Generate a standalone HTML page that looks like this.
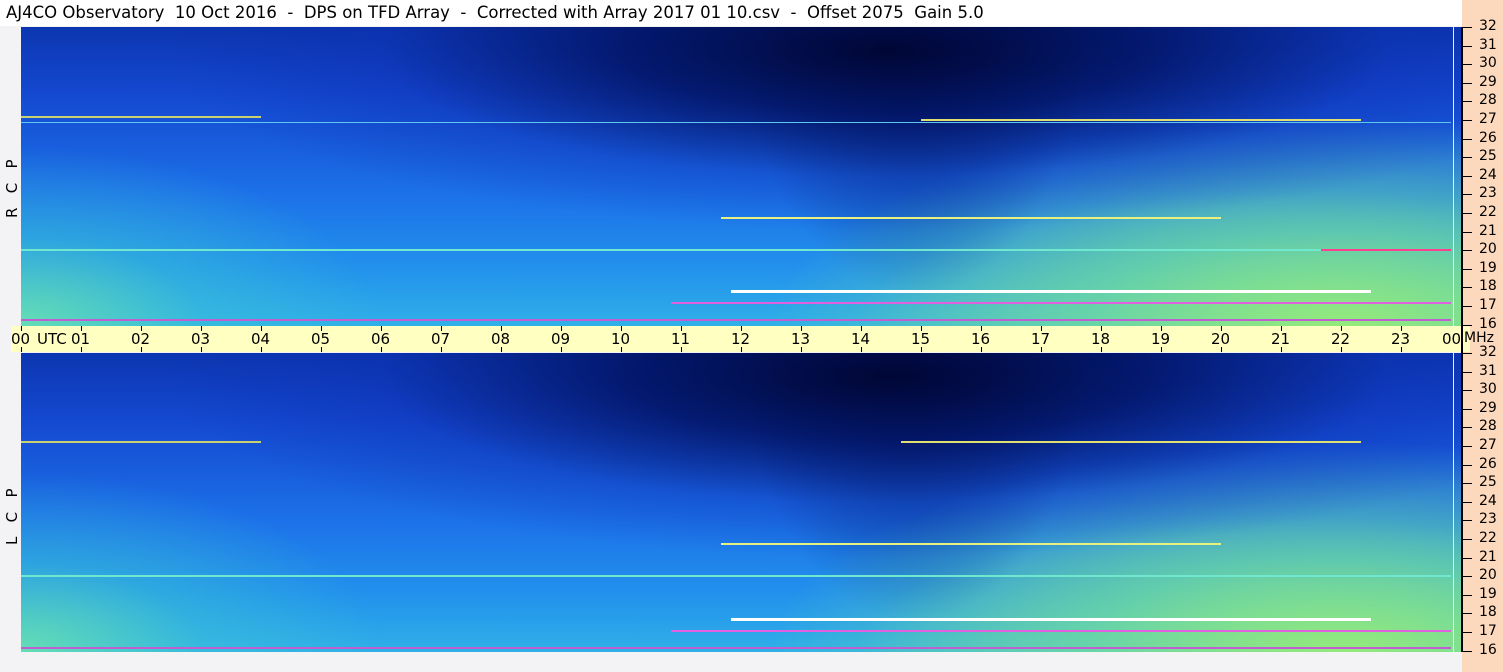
<!DOCTYPE html>
<html><head><meta charset="utf-8"><style>
*{margin:0;padding:0;box-sizing:border-box}
body{width:1503px;height:672px;position:relative;background:#f3f3f6;font-family:"DejaVu Sans","Liberation Sans",sans-serif;overflow:hidden}
.title{position:absolute;left:0;top:0;width:1462px;height:26px;background:#fff;font-size:16.5px;line-height:26px;padding-left:6px;white-space:pre;color:#000}
.peach{position:absolute;left:1462px;top:0;width:41px;height:672px;background:#fcd9bd}
.panel{position:absolute;left:21px;width:1440px;height:299px;overflow:hidden;
background:
radial-gradient(ellipse 50% 60% at 60% 8%,rgba(0,5,50,.95) 0%,rgba(0,15,90,.8) 35%,rgba(10,40,170,.3) 70%,rgba(10,40,170,0) 100%),
radial-gradient(ellipse 12% 90% at 62% 0%,rgba(0,10,70,.6) 0%,rgba(0,10,70,0) 100%),
radial-gradient(ellipse 40% 70% at 92% 100%,rgba(150,235,120,.95) 0%,rgba(110,220,160,.7) 45%,rgba(60,180,220,0) 100%),
radial-gradient(ellipse 30% 45% at 88% 100%,rgba(170,240,110,.6) 0%,rgba(170,240,110,0) 100%),
radial-gradient(ellipse 25% 60% at 0% 100%,rgba(110,230,170,.85) 0%,rgba(60,200,210,.45) 50%,rgba(40,160,230,0) 100%),
linear-gradient(180deg,#0c36b0 0%,#1448d0 22%,#1c70e8 55%,#2290ec 80%,#30b0e8 100%)}
.panel div{position:absolute}
.ln{height:2px}
.band{position:absolute;left:11px;top:326px;width:1459px;height:26px;background:#ffffc2}
.band span{position:absolute;top:4px;font-size:15px}
.tk{position:absolute;width:1px;background:#000}
.ax{position:absolute;left:1461px;width:2px;background:#000}
.lab{position:absolute;font-size:14px;left:1479px}
.side{position:absolute;left:3px;font-size:15px;transform:rotate(-90deg);transform-origin:left top;white-space:pre}
.rline{position:absolute;left:1453px;width:1px;background:#e0f0ff}
</style></head><body>
<div class="title">AJ4CO Observatory  10 Oct 2016  -  DPS on TFD Array  -  Corrected with Array 2017 01 10.csv  -  Offset 2075  Gain 5.0</div>
<div class="peach"></div>

<div class="panel" style="top:27px">
<div class="ln" style="left:0;top:95px;width:1430px;height:1px;background:#60c8f0"></div>
<div class="ln" style="left:0;top:222px;width:1430px;background:#70e8d0"></div>
<div class="ln" style="left:0;top:89px;width:240px;height:2px;background:#c8d070"></div>
<div class="ln" style="left:710px;top:263px;width:640px;height:3px;background:#fff"></div>
<div class="ln" style="left:650px;top:275px;width:780px;background:#e060e0"></div>
<div class="ln" style="left:700px;top:190px;width:500px;background:#e8f080"></div>
<div class="ln" style="left:900px;top:92px;width:440px;height:2px;background:#e0e070"></div>
<div class="ln" style="left:0;top:292px;width:1430px;background:#c060d0"></div>
<div class="ln" style="left:1300px;top:222px;width:130px;background:#ff4090"></div>
</div>
<div class="panel" style="top:353px">
<div class="ln" style="left:0;top:88px;width:240px;height:2px;background:#c8d070"></div>
<div class="ln" style="left:0;top:222px;width:1430px;background:#70e8d0"></div>
<div class="ln" style="left:710px;top:265px;width:640px;height:3px;background:#fff"></div>
<div class="ln" style="left:650px;top:277px;width:780px;background:#e060e0"></div>
<div class="ln" style="left:700px;top:190px;width:500px;background:#e8f080"></div>
<div class="ln" style="left:880px;top:88px;width:460px;height:2px;background:#e0e070"></div>
<div class="ln" style="left:0;top:294px;width:1430px;background:#c060d0"></div>
</div>
<div class="rline" style="top:27px;height:299px"></div>
<div class="rline" style="top:353px;height:299px"></div>

<div class="band" id="band"></div>
<div class="ax" style="top:27px;height:625px"></div>
<div style="position:absolute;left:1464px;top:330px;font-size:14px">MHz</div>

<div class="side" style="top:218px">R   C   P</div>
<div class="side" style="top:545px">L   C   P</div>

<script>
var b=document.getElementById('band'),h='';
for(var i=0;i<=24;i++){var x=10+60*i;var t=i==24?'00':(i<10?'0'+i:''+i);
h+='<span style="left:'+(x-(i==24?19:10))+'px">'+t+'</span>';
h+='<div class="tk" style="left:'+x+'px;top:0;height:5px"></div><div class="tk" style="left:'+x+'px;top:21px;height:5px"></div>';}
h+='<span style="left:26px">UTC</span>';
b.innerHTML=h;
var o='';
[27,353].forEach(function(t){for(var k=0;k<=16;k++){var y=t+k*18.6;
o+='<div class="tk" style="left:1462px;top:'+y+'px;width:10px;height:1px"></div>';
o+='<div class="lab" style="top:'+(y-9)+'px">'+(32-k)+'</div>';}});
document.body.insertAdjacentHTML('beforeend',o);
</script>
</body></html>
